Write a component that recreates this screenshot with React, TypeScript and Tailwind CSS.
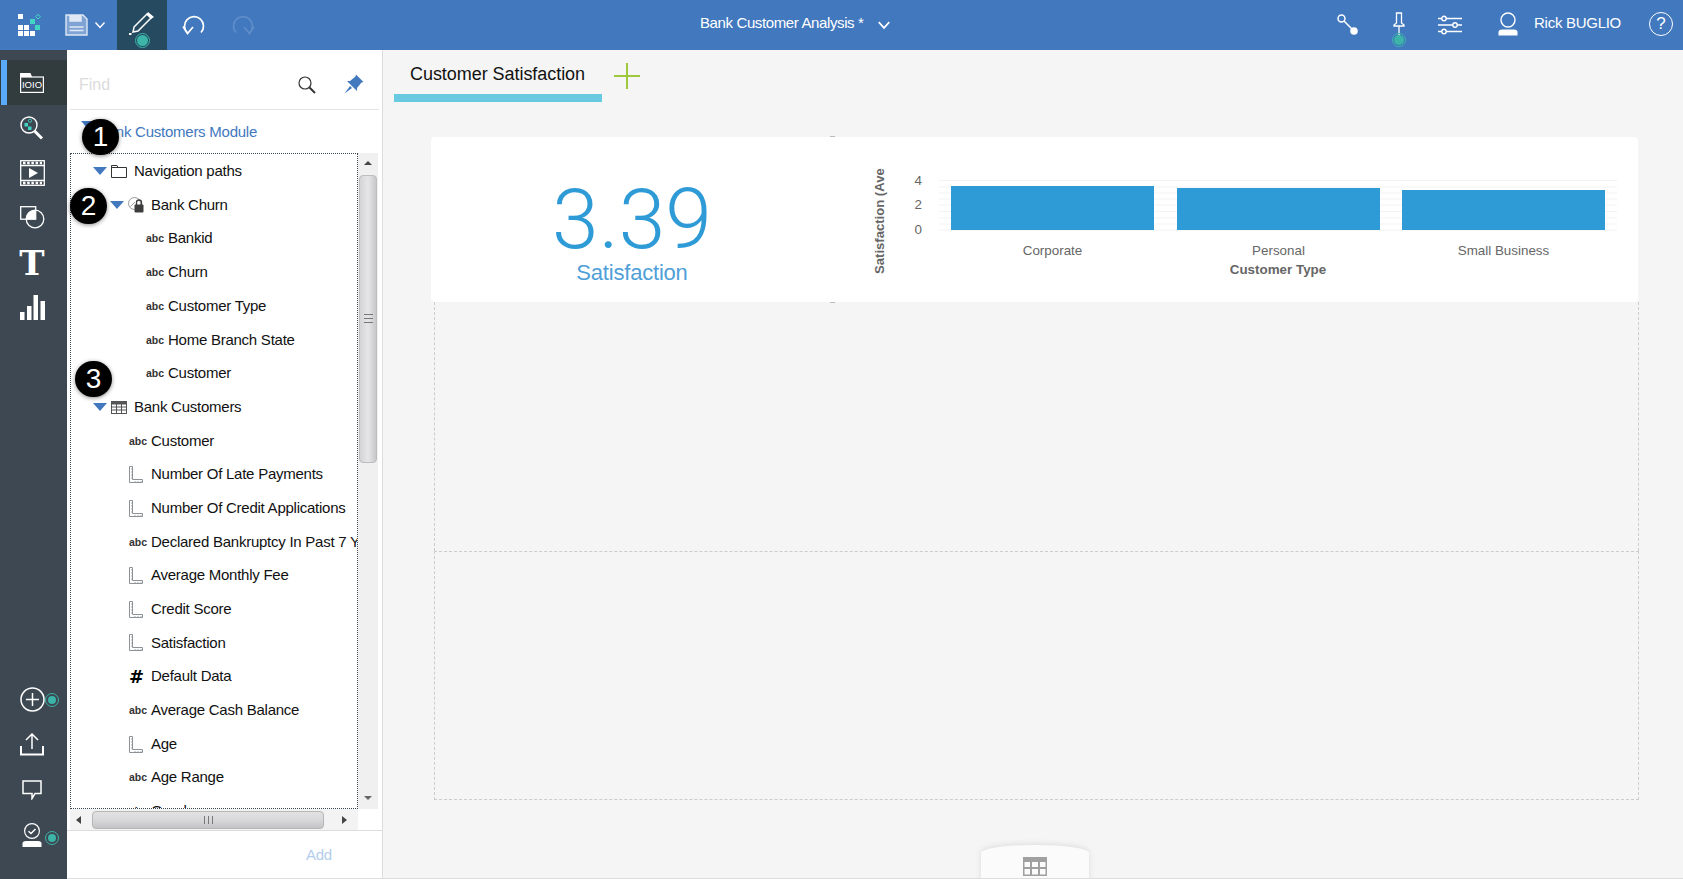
import type { ReactNode } from "react";

const FONT = "font-['Liberation_Sans',Arial,sans-serif]";

type Kind = "folder" | "gauge" | "table" | "abc" | "ruler" | "hash";

const treeRows: { label: string; kind: Kind; indent: string; open?: boolean }[] = [
  { label: "Navigation paths", kind: "folder", indent: "pl-[22px]", open: true },
  { label: "Bank Churn", kind: "gauge", indent: "pl-[39px]", open: true },
  { label: "Bankid", kind: "abc", indent: "pl-[75px]" },
  { label: "Churn", kind: "abc", indent: "pl-[75px]" },
  { label: "Customer Type", kind: "abc", indent: "pl-[75px]" },
  { label: "Home Branch State", kind: "abc", indent: "pl-[75px]" },
  { label: "Customer", kind: "abc", indent: "pl-[75px]" },
  { label: "Bank Customers", kind: "table", indent: "pl-[22px]", open: true },
  { label: "Customer", kind: "abc", indent: "pl-[58px]" },
  { label: "Number Of Late Payments", kind: "ruler", indent: "pl-[58px]" },
  { label: "Number Of Credit Applications", kind: "ruler", indent: "pl-[58px]" },
  { label: "Declared Bankruptcy In Past 7 Years", kind: "abc", indent: "pl-[58px]" },
  { label: "Average Monthly Fee", kind: "ruler", indent: "pl-[58px]" },
  { label: "Credit Score", kind: "ruler", indent: "pl-[58px]" },
  { label: "Satisfaction", kind: "ruler", indent: "pl-[58px]" },
  { label: "Default Data", kind: "hash", indent: "pl-[58px]" },
  { label: "Average Cash Balance", kind: "abc", indent: "pl-[58px]" },
  { label: "Age", kind: "ruler", indent: "pl-[58px]" },
  { label: "Age Range", kind: "abc", indent: "pl-[58px]" },
  { label: "Gender", kind: "abc", indent: "pl-[58px]" },
];

const Dot = ({ className }: { className: string }) => (
  <span className={`absolute w-[12px] h-[12px] rounded-full bg-[#3cb4a8] border-2 border-[#3d4852] outline outline-1 outline-[#3cb4a8] ${className}`} />
);

function Logo() {
  return (
    <svg width="24" height="24" viewBox="0 0 24 24">
      <g fill="#fff">
        <rect x="0" y="0" width="5" height="5" />
        <rect x="0" y="11" width="5" height="5" />
        <rect x="6" y="11" width="5" height="5" />
        <rect x="0" y="17" width="5" height="5" />
        <rect x="6" y="17" width="5" height="5" />
        <rect x="12" y="17" width="5" height="5" />
      </g>
      <rect x="12" y="5" width="5" height="5" fill="#41d6c3" />
      <rect x="17" y="11" width="5" height="5" fill="#41d6c3" />
      <path d="M20 0.5 L22.5 2.5 L20 5 L17.5 2.5 Z" fill="none" stroke="#41d6c3" />
    </svg>
  );
}

function SaveIcon() {
  return (
    <svg width="23" height="22" viewBox="0 0 23 22" fill="none" stroke="#dfe8f4" strokeWidth="1.4">
      <path d="M1 1 H18 L22 5 V21 H1 Z" fill="#7fa3d4" />
      <path d="M5 1 V7 H16 V1" fill="#dfe8f4" />
      <path d="M4.5 13 H18.5 M4.5 16.5 H18.5" />
    </svg>
  );
}

function Chevron({ size = 12, stroke = "#fff" }: { size?: number; stroke?: string }) {
  return (
    <svg width={size} height={size} viewBox="0 0 12 12" fill="none" stroke={stroke} strokeWidth="1.4">
      <path d="M1.5 3.5 L6 8.5 L10.5 3.5" />
    </svg>
  );
}

function PencilIcon() {
  return (
    <svg width="26" height="24" viewBox="0 0 26 24" fill="none" stroke="#fff" strokeWidth="1.5">
      <path d="M5 16 L18 3 L22 7 L9 20 L4 21 Z" />
      <path d="M19 1 L25 6 L22 8 L17.5 3.5 Z" fill="#fff" stroke="none" />
      <rect x="0" y="22" width="2.5" height="2" fill="#fff" stroke="none" />
    </svg>
  );
}

function UndoIcon({ flip, stroke }: { flip?: boolean; stroke: string }) {
  return (
    <svg width="24" height="21" viewBox="0 0 24 21" fill="none" stroke={stroke} strokeWidth="1.7" className={flip ? "-scale-x-100" : ""}>
      <path d="M19 17.5 A9.5 9.5 0 1 0 5.5 18" />
      <path d="M1 11.5 L5.5 18.5 L11 12" />
    </svg>
  );
}

function ConnectorIcon() {
  return (
    <svg width="22" height="22" viewBox="0 0 22 22" fill="none" stroke="#fff" strokeWidth="1.5">
      <circle cx="4.5" cy="4.5" r="3.5" />
      <path d="M7 7 L16 16" />
      <circle cx="17" cy="17" r="3.8" fill="#fff" stroke="none" />
    </svg>
  );
}

function PinOutlineIcon() {
  return (
    <svg width="12" height="24" viewBox="0 0 12 24" fill="none" stroke="#fff" strokeWidth="1.3">
      <path d="M3.5 1 H8.5 V11 L11 13 V14 H1 V13 L3.5 11 Z" />
      <path d="M6 14 V24" />
    </svg>
  );
}

function SlidersIcon() {
  return (
    <svg width="24" height="20" viewBox="0 0 24 20" fill="none" stroke="#fff" strokeWidth="1.4">
      <path d="M0 3.5 H24 M0 10 H24 M0 16.5 H24" />
      <circle cx="6" cy="3.5" r="2.2" fill="#4178be" />
      <circle cx="17" cy="10" r="2.2" fill="#4178be" />
      <circle cx="6" cy="16.5" r="2.2" fill="#4178be" />
    </svg>
  );
}

function UserIcon() {
  return (
    <svg width="20" height="24" viewBox="0 0 20 24" fill="none" stroke="#fff" strokeWidth="1.4">
      <circle cx="10" cy="8" r="7" />
      <path d="M0.5 23.5 V20 Q0.5 17.5 4 17.5 H16 Q19.5 17.5 19.5 20 V23.5 Z" fill="#fff" stroke="none" />
    </svg>
  );
}

function HelpIcon() {
  return (
    <span className="flex items-center justify-center w-[24px] h-[24px] rounded-full border-[1.5px] border-white text-white text-[17px] leading-none">?</span>
  );
}

function DataIcon() {
  return (
    <svg width="24" height="20" viewBox="0 0 24 20" fill="none" stroke="#fff" strokeWidth="1.2">
      <path d="M0.6 4 V0.6 H10 L11.5 4" fill="#fff" />
      <rect x="0.6" y="4" width="22.8" height="15.4" />
      <text x="12" y="15" fontSize="9.5" fill="#fff" stroke="none" textAnchor="middle" fontFamily="Liberation Sans">IOIO</text>
    </svg>
  );
}

function SearchDataIcon() {
  return (
    <svg width="24" height="24" viewBox="0 0 24 24" fill="none" stroke="#fff" strokeWidth="1.4">
      <circle cx="9" cy="9" r="8" />
      <path d="M14.5 15 L22 22.5" strokeWidth="3" />
      <rect x="4.5" y="7" width="3.5" height="3.5" fill="#41d6c3" stroke="none" />
      <rect x="8" y="10.5" width="3.5" height="3.5" fill="#41d6c3" stroke="none" />
      <circle cx="10" cy="4.8" r="1.6" strokeWidth="0.8" stroke="#41d6c3" />
    </svg>
  );
}

function FilmIcon() {
  return (
    <svg width="25" height="26" viewBox="0 0 25 26" fill="none" stroke="#fff" strokeWidth="1.3">
      <rect x="0.7" y="0.7" width="23.6" height="24.6" />
      <path d="M1 5.5 H24 M1 20.5 H24" />
      <path d="M3 3 H22 M3 23 H22" strokeWidth="2.4" strokeDasharray="2.5 1.7" />
      <path d="M9 8 L18 13 L9 18 Z" fill="#fff" stroke="none" />
    </svg>
  );
}

function ShapesIcon() {
  return (
    <svg width="25" height="23" viewBox="0 0 25 23" fill="none" stroke="#fff" strokeWidth="1.3">
      <rect x="0.7" y="0.7" width="15" height="12.5" />
      <circle cx="15" cy="13" r="8.8" />
      <path d="M15 4.2 V13.2 H6.2 V13 A8.8 8.8 0 0 1 15 4.2 Z" fill="#fff" stroke="none" />
    </svg>
  );
}

function BarsIcon() {
  return (
    <svg width="25" height="25" viewBox="0 0 25 25" fill="#fff">
      <rect x="0" y="17" width="4.5" height="8" />
      <rect x="7" y="11" width="4.5" height="14" />
      <rect x="13.5" y="0" width="4.5" height="25" />
      <rect x="20.5" y="6" width="4.5" height="19" />
    </svg>
  );
}

function PlusCircleIcon() {
  return (
    <svg width="25" height="25" viewBox="0 0 25 25" fill="none" stroke="#fff" strokeWidth="1.5">
      <circle cx="12.5" cy="12.5" r="11.5" />
      <path d="M12.5 6 V19 M6 12.5 H19" />
    </svg>
  );
}

function UploadIcon() {
  return (
    <svg width="24" height="23" viewBox="0 0 24 23" fill="none" stroke="#fff" strokeWidth="1.5">
      <path d="M12 16 V1 M6 7 L12 1 L18 7" />
      <path d="M1 13 V21.5 H23 V13" strokeWidth="2" />
    </svg>
  );
}

function CommentIcon() {
  return (
    <svg width="20" height="20" viewBox="0 0 20 20" fill="none" stroke="#fff" strokeWidth="1.5">
      <path d="M1 1 H19 V13.5 H13 L10 18.5 V13.5 H1 Z" />
    </svg>
  );
}

function UserCheckIcon() {
  return (
    <svg width="20" height="24" viewBox="0 0 20 24" fill="none" stroke="#fff" strokeWidth="1.2">
      <circle cx="10" cy="8" r="7.4" />
      <path d="M6.5 8.3 L9 10.5 L13.5 6" strokeWidth="1.5" />
      <path d="M0.5 24 V20.5 Q0.5 18 4 18 H16 Q19.5 18 19.5 20.5 V24 Z" fill="#fff" stroke="none" />
    </svg>
  );
}

function RailItem({ children, active }: { children: ReactNode; active?: boolean }) {
  return (
    <div className={`relative flex items-center justify-center w-full h-[45px] pr-[3px] ${active ? "bg-[#323c3f]" : ""}`}>
      {active && <span className="absolute left-px top-0 bottom-0 w-[6px] bg-[#5aaafa]" />}
      {children}
    </div>
  );
}

function Rail() {
  return (
    <div className="flex flex-col items-center w-[67px] shrink-0 bg-[#3d4852] pt-[10px] pb-[22px]">
      <RailItem active><DataIcon /></RailItem>
      <RailItem><SearchDataIcon /></RailItem>
      <RailItem><FilmIcon /></RailItem>
      <RailItem><ShapesIcon /></RailItem>
      <RailItem>
        <span className="text-white text-[34px] leading-none font-bold font-['DejaVu_Serif',serif]">T</span>
      </RailItem>
      <RailItem><BarsIcon /></RailItem>
      <div className="mt-auto w-full">
        <RailItem>
          <PlusCircleIcon />
          <Dot className="left-[46px] top-[17px]" />
        </RailItem>
        <RailItem><UploadIcon /></RailItem>
        <RailItem><CommentIcon /></RailItem>
        <RailItem>
          <UserCheckIcon />
          <Dot className="left-[46px] top-[20px]" />
        </RailItem>
      </div>
    </div>
  );
}

function RulerIcon() {
  return (
    <svg width="14" height="17" viewBox="0 0 14 17" fill="none" stroke="#8c9296" strokeWidth="1">
      <path d="M0.5 0.5 H3.5 V13.5 H13.5 V16.5 H0.5 Z" />
      <path d="M2 3 H3 M2 6 H3 M2 9 H3 M2 12 H3 M6 15 V16 M9 15 V16 M12 15 V16" strokeWidth="0.8" />
    </svg>
  );
}

function TreeIcon({ kind }: { kind: Kind }) {
  if (kind === "abc") {
    return <span className="text-[10.5px] leading-none font-bold text-[#333] w-[22px] shrink-0">abc</span>;
  }
  if (kind === "hash") {
    return <span className="text-[18px] leading-none font-bold text-black w-[22px] shrink-0 font-['DejaVu_Sans',sans-serif]">#</span>;
  }
  if (kind === "ruler") {
    return <span className="w-[22px] shrink-0 flex"><RulerIcon /></span>;
  }
  if (kind === "folder") {
    return (
      <svg width="16" height="13" viewBox="0 0 16 13" fill="none" stroke="#333" strokeWidth="1" className="mr-px">
        <path d="M0.5 12.5 V0.5 H6 L7 2.5 H15.5 V12.5 Z" />
        <path d="M0.5 2.5 H7" />
      </svg>
    );
  }
  if (kind === "table") {
    return (
      <svg width="16" height="13" viewBox="0 0 16 13" fill="none" stroke="#555" strokeWidth="1" className="mr-px">
        <rect x="0.5" y="0.5" width="15" height="12" />
        <rect x="0.5" y="0.5" width="15" height="2.5" fill="#555" />
        <path d="M0.5 6 H15.5 M0.5 9 H15.5 M5.5 3 V12.5 M10.5 3 V12.5" />
      </svg>
    );
  }
  return (
    <svg width="16" height="16" viewBox="0 0 16 16" fill="none" className="mr-px">
      <circle cx="6.5" cy="6.5" r="6" stroke="#999" />
      <path d="M2.5 9.5 L7 5" stroke="#999" />
      <rect x="6.5" y="7.5" width="9" height="8" rx="1" fill="#3d3d3d" />
      <path d="M8.5 8 V5.5 A2.5 2.5 0 0 1 13.5 5.5 V8" stroke="#3d3d3d" strokeWidth="1.3" />
    </svg>
  );
}

function TreeRow({ label, kind, indent, open }: { label: string; kind: Kind; indent: string; open?: boolean }) {
  return (
    <div className={`flex items-center h-[33.7px] shrink-0 whitespace-nowrap ${indent}`}>
      {open && <span className="w-0 h-0 mr-[4px] border-x-[7.5px] border-x-transparent border-t-[8px] border-t-[#4178be]" />}
      <TreeIcon kind={kind} />
      <span className={`text-[15px] tracking-[-0.25px] text-[#111] ${kind === "folder" || kind === "table" || kind === "gauge" ? "ml-[6px]" : ""}`}>{label}</span>
    </div>
  );
}

function Badge({ n, className }: { n: number; className: string }) {
  return (
    <span className={`absolute flex items-center justify-center w-[37px] h-[36px] rounded-full bg-black text-white text-[28px] leading-none shadow-[0_1px_4px_rgba(0,0,0,0.45)] ${className}`}>{n}</span>
  );
}

function VerticalScrollbar() {
  return (
    <div className="flex flex-col items-center w-[20px] shrink-0 bg-[#f0f0f0]">
      <span className="mt-[8px] w-0 h-0 border-x-[4px] border-x-transparent border-b-[4px] border-b-[#444]" />
      <div className="mt-[10px] flex items-center justify-center w-[18px] h-[288px] bg-gradient-to-r from-[#d4d4d6] via-[#e6e6e8] to-[#c8c8ca] border border-[#bdbdbd] rounded-sm">
        <span className="w-[9px] h-[9px] -mt-[1px] border-y border-[#777] flex items-center"><span className="w-full h-px bg-[#777]" /></span>
      </div>
      <span className="mt-auto mb-[9px] w-0 h-0 border-x-[4px] border-x-transparent border-t-[4px] border-t-[#666]" />
    </div>
  );
}

function HorizontalScrollbar() {
  return (
    <div className="flex items-center h-[21px] w-[288px] ml-[3px] shrink-0 bg-[#f3f3f3] pl-[6px]">
      <span className="w-0 h-0 border-y-[4px] border-y-transparent border-r-[5px] border-r-[#444]" />
      <div className="ml-[11px] flex items-center justify-center w-[232px] h-[18px] bg-gradient-to-b from-[#e2e2e4] via-[#d8d8da] to-[#c4c4c6] border border-[#b5b5b5] rounded-sm">
        <span className="w-[9px] h-[8px] border-x border-[#777] flex justify-center"><span className="h-full w-px bg-[#777]" /></span>
      </div>
      <span className="ml-[18px] w-0 h-0 border-y-[4px] border-y-transparent border-l-[5px] border-l-[#444]" />
    </div>
  );
}

function DataPanel() {
  return (
    <div className="relative flex flex-col w-[316px] shrink-0 bg-white border-r border-b border-[#ddd]">
      <div className="flex items-center h-[60px] mx-[3px] pt-[8px] pl-[9px] pr-[15px] border-b border-[#e4e4e4] shrink-0">
        <span className="text-[16px] text-[#dcdcdc] flex-1 pt-[2px]">Find</span>
        <svg width="18" height="18" viewBox="0 0 18 18" fill="none" stroke="#333" strokeWidth="1.2" className="mr-[28px] mt-[2px]">
          <circle cx="7" cy="7" r="6" />
          <path d="M11.5 11.5 L17 17" strokeWidth="2" />
        </svg>
        <svg width="20" height="20" viewBox="0 0 20 20" fill="#4178be">
          <path d="M12 0.5 L19.5 8 L17.5 8.5 L13 14 L13 17 L3 7 L6 7 L11.5 2.5 Z" />
          <path d="M6 12 L0.5 19.5 L8 14 Z" />
        </svg>
      </div>
      <div className="flex items-center h-[43px] pt-[2px] pl-[31px] shrink-0">
        <span className="text-[15px] tracking-[-0.25px] text-[#4178be]">Bank Customers Module</span>
      </div>
      <div className="flex flex-1 min-h-0 ml-[3px] mr-[4px]">
        <div className="flex flex-col w-[289px] pt-[0.5px] overflow-hidden border border-dotted border-[#3b4a55]">
          {treeRows.map((row, i) => (
            <TreeRow key={i} {...row} />
          ))}
        </div>
        <VerticalScrollbar />
      </div>
      <HorizontalScrollbar />
      <div className="flex items-center justify-end h-[48px] shrink-0 pt-[2px] pr-[50px] border-t border-[#ddd]">
        <span className="text-[15px] tracking-[-0.2px] text-[#b4cdec]">Add</span>
      </div>
      <span className="absolute left-[14px] top-[71px] w-0 h-0 border-x-[7px] border-x-transparent border-t-[8px] border-t-[#4178be]" />
      <Badge n={1} className="left-[15px] top-[69px]" />
      <Badge n={2} className="left-[3px] top-[138px]" />
      <Badge n={3} className="left-[8px] top-[311px]" />
    </div>
  );
}

function BarChart() {
  const gridY = [180.5, 187, 193, 199, 205, 211.5, 218, 224, 230];
  const bars = [
    { x: 951, y: 186, label: "Corporate" },
    { x: 1177, y: 188, label: "Personal" },
    { x: 1402, y: 190, label: "Small Business" },
  ];
  return (
    <svg width="805" height="165" viewBox="833 137 805 165" className="block">
      {gridY.map((y) => (
        <line key={y} x1="939" x2="1617" y1={y} y2={y} stroke="#f3f3f3" strokeWidth="1" />
      ))}
      {bars.map((b) => (
        <rect key={b.x} x={b.x} y={b.y} width="203" height={230 - b.y} fill="#2f9bd6" />
      ))}
      <g fontFamily="Liberation Sans" fontSize="13.4" fill="#666">
        <text x="922" y="184.5" textAnchor="end">4</text>
        <text x="922" y="208.5" textAnchor="end">2</text>
        <text x="922" y="233.5" textAnchor="end">0</text>
        {bars.map((b) => (
          <text key={b.label} x={b.x + 101.5} y="255" textAnchor="middle">{b.label}</text>
        ))}
        <text x="1278" y="274" textAnchor="middle" fontWeight="700">Customer Type</text>
        <text transform="translate(884 274) rotate(-90)" fontWeight="700" fontSize="13.1">Satisfaction (Ave</text>
      </g>
    </svg>
  );
}

function Canvas() {
  return (
    <div className="flex flex-col flex-1 min-w-0 overflow-hidden bg-[#f5f5f5] border-b border-[#ddd]">
      <div className="flex items-start ml-[11px] shrink-0">
        <div className="w-[208px] h-[52px] pl-[16px] pt-[13px] border-b-[8px] border-[#69c9e0] text-[18px] leading-[22px] tracking-[-0.05px] text-[#111]">
          Customer Satisfaction
        </div>
        <svg width="26" height="26" viewBox="0 0 26 26" stroke="#9ec93c" strokeWidth="2" className="ml-[12px] mt-[13px]">
          <path d="M13 0 V26 M0 13 H26" />
        </svg>
      </div>
      <div className="ml-[48px] mt-[35px] w-[1207px] shrink-0">
        <div className="relative flex h-[165px] bg-white rounded-sm">
          <div className="flex flex-col items-center w-[402px] text-[#2f9bd6] pt-[50px]">
            <span className="text-[84px] leading-[66px] font-light font-['Roboto',sans-serif]">3.39</span>
            <span className="text-[22px] leading-[26px] text-[#4f9fd8] mt-[7px] tracking-[-0.2px]">Satisfaction</span>
          </div>
          <BarChart />
          <span className="absolute left-[399px] -top-px w-[5px] h-px bg-[#bbb]" />
          <span className="absolute left-[399px] -bottom-px w-[5px] h-px bg-[#bbb]" />
        </div>
        <div className="ml-[3px] w-[1205px] h-[249px] border-x border-dashed border-[#ccc]" />
        <div className="ml-[3px] w-[1205px] h-[249px] border border-dashed border-[#ccc]" />
      </div>
      <div className="ml-[598px] mt-[45px] w-[108px] h-[40px] shrink-0 flex justify-center pt-[12px] bg-[#fbfbfb] rounded-t-[54px_8px] shadow-[0_-1px_6px_rgba(0,0,0,0.1)]">
        <svg width="24" height="19" viewBox="0 0 24 19" fill="#a0a0a0">
          <path d="M0 0 H24 V19 H0 Z M1.5 5 V10 H7 V5 Z M9 5 V10 H15 V5 Z M17 5 V10 H22.5 V5 Z M1.5 12 V17.5 H7 V12 Z M9 12 V17.5 H15 V12 Z M17 12 V17.5 H22.5 V12 Z" fillRule="evenodd" />
        </svg>
      </div>
    </div>
  );
}

function TopBar() {
  return (
    <div className="flex items-center h-[50px] shrink-0 bg-[#4178be] text-white">
      <div className="flex items-center h-full">
        <div className="pl-[18px] pr-[23px] pt-px"><Logo /></div>
        <SaveIcon />
        <div className="ml-[6px] w-[23px]"><Chevron size={12} /></div>
        <div className="relative flex justify-center pt-[11px] w-[50px] h-full bg-[#264a60]">
          <PencilIcon />
          <span className="absolute left-[20px] top-[35px] w-[11px] h-[11px] rounded-full bg-[#3cb4a8] outline outline-1 outline-offset-1 outline-[#3cb4a8]" />
        </div>
        <div className="ml-[15px]"><UndoIcon stroke="#fff" /></div>
        <div className="ml-[25px]"><UndoIcon flip stroke="#5f8dc9" /></div>
      </div>
      <div className="flex items-center ml-[445px] mb-[3px]">
        <span className="text-[15px] tracking-[-0.38px]">Bank Customer Analysis *</span>
        <span className="ml-[14px] mt-[3px]"><Chevron size={14} /></span>
      </div>
      <div className="flex items-center ml-auto pr-[10px]">
        <ConnectorIcon />
        <div className="relative ml-[34px] mb-[2px] flex">
          <PinOutlineIcon />
          <span className="absolute left-[1px] top-[23px] w-[10px] h-[10px] rounded-full bg-[#3cb4a8] outline outline-1 outline-offset-1 outline-[#3cb4a8]" />
        </div>
        <div className="ml-[33px] mb-[1px]"><SlidersIcon /></div>
        <div className="ml-[36px] mb-[3px]"><UserIcon /></div>
        <span className="ml-[16px] text-[15px] tracking-[-0.28px] mb-[3px]">Rick BUGLIO</span>
        <div className="ml-[28px] mb-[3px]"><HelpIcon /></div>
      </div>
    </div>
  );
}

export default function App() {
  return (
    <div className={`flex flex-col w-[1683px] h-[879px] overflow-hidden bg-[#f5f5f5] ${FONT}`}>
      <TopBar />
      <div className="flex flex-1 min-h-0">
        <Rail />
        <DataPanel />
        <Canvas />
      </div>
    </div>
  );
}
